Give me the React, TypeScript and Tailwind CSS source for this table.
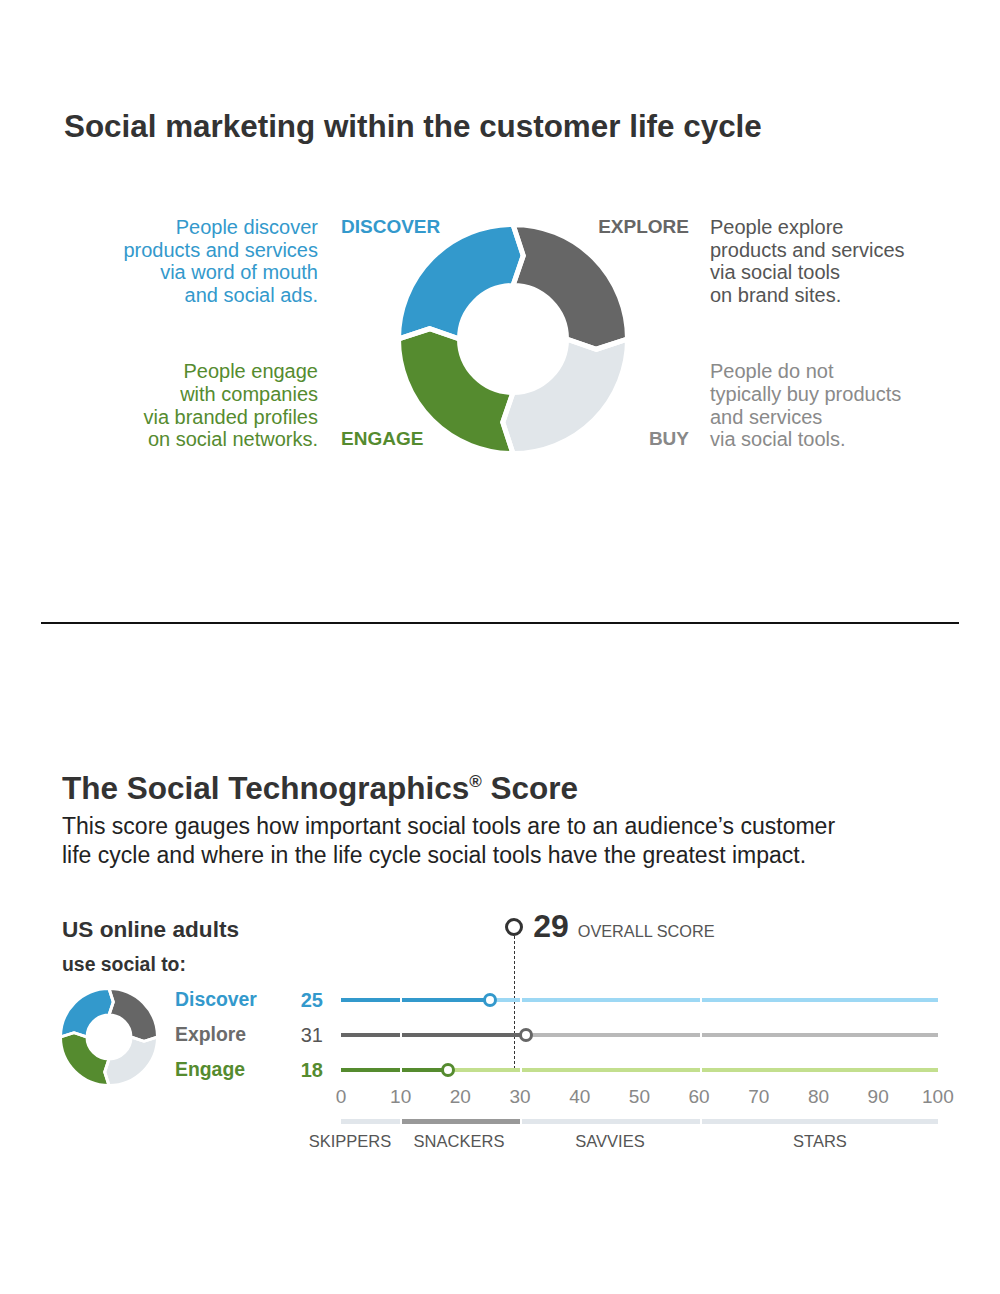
import React from 'react';

// ============================================================================
// DATA
// ============================================================================

type Segment = { a0: number; a1: number; color: string };

const DONUT_SEGMENTS: Segment[] = [
  { a0: 180, a1: 270, color: '#3399cc' }, // discover
  { a0: 270, a1: 360, color: '#666666' }, // explore
  { a0: 0, a1: 90, color: '#e1e6ea' }, // buy
  { a0: 90, a1: 180, color: '#558b2f' }, // engage
];

const SCALE = [
  { start: 0, len: 10, grow: 'grow-[10]' },
  { start: 10, len: 20, grow: 'grow-[20]' },
  { start: 30, len: 30, grow: 'grow-[30]' },
  { start: 60, len: 40, grow: 'grow-[40]' },
];

const ROWS = [
  {
    key: 'discover',
    label: 'Discover',
    value: 25,
    labelCls: 'font-bold text-[#3399cc]',
    numCls: 'font-bold text-[#3399cc]',
    dark: 'bg-[#3399cc]',
    light: 'bg-[#9dd8f4]',
    ring: 'border-[#3399cc]',
  },
  {
    key: 'explore',
    label: 'Explore',
    value: 31,
    labelCls: 'font-bold text-[#6b6b6b]',
    numCls: 'text-[#555555]',
    dark: 'bg-[#666666]',
    light: 'bg-[#b9b9b9]',
    ring: 'border-[#666666]',
  },
  {
    key: 'engage',
    label: 'Engage',
    value: 18,
    labelCls: 'font-bold text-[#558b2f]',
    numCls: 'font-bold text-[#558b2f]',
    dark: 'bg-[#558b2f]',
    light: 'bg-[#c3df8e]',
    ring: 'border-[#558b2f]',
  },
];

const OVERALL = 29;
const TICKS = [0, 10, 20, 30, 40, 50, 60, 70, 80, 90, 100];

// ============================================================================
// DONUT
// ============================================================================

function Donut({ size, gap }: { size: number; gap: number }) {
  const ro = 112 + gap / 2;
  const ri = 56 - gap / 2;
  const rm = 84;
  const d = 7;

  const pt = (r: number, a: number) => {
    const t = (a * Math.PI) / 180;
    return `${(r * Math.cos(t)).toFixed(2)} ${(r * Math.sin(t)).toFixed(2)}`;
  };

  const path = (a0: number, a1: number) =>
    `M ${pt(ro, a0)} A ${ro} ${ro} 0 0 1 ${pt(ro, a1)} L ${pt(rm, a1 + d)} L ${pt(ri, a1)} ` +
    `A ${ri} ${ri} 0 0 0 ${pt(ri, a0)} L ${pt(rm, a0 + d)} Z`;

  return (
    <svg width={size} height={size} viewBox="-112 -112 224 224" className="block">
      {DONUT_SEGMENTS.map((s) => (
        <path key={`f${s.a0}`} d={path(s.a0, s.a1)} fill={s.color} />
      ))}
      {DONUT_SEGMENTS.map((s) => (
        <path
          key={`s${s.a0}`}
          d={path(s.a0, s.a1)}
          fill="none"
          stroke="#ffffff"
          strokeWidth={gap}
          strokeLinejoin="miter"
        />
      ))}
    </svg>
  );
}

// ============================================================================
// SCORE BAR
// ============================================================================

function ScoreBar({ row }: { row: (typeof ROWS)[number] }) {
  return (
    <div className="relative flex h-[35px] items-center">
      <div className="flex h-[4px] w-full gap-[2px]">
        {SCALE.map((s) => {
          const fill = Math.max(0, Math.min(1, (row.value - s.start) / s.len)) * 100;
          return (
            <div key={s.start} className={`${s.grow} basis-0 h-full ${row.light}`}>
              <div className={`h-full ${row.dark}`} style={{ width: `${fill}%` }} />
            </div>
          );
        })}
      </div>
      <div
        className={`absolute top-1/2 h-[14px] w-[14px] -translate-y-1/2 rounded-full border-[3px] bg-white ${row.ring}`}
        style={{ left: `calc(${row.value}% - 7px)` }}
      />
    </div>
  );
}

// ============================================================================
// APP
// ============================================================================

export default function App() {
  return (
    <div className="h-[1294px] w-[1000px] overflow-hidden bg-white font-['Liberation_Sans',Arial,sans-serif]">
      {/* ── Life cycle ─────────────────────────────────────── */}
      <div className="pl-[64px] pt-[109px]">
        <h1 className="text-[31.4px] font-bold leading-[36px] text-[#333333]">
          Social marketing within the customer life cycle
        </h1>

        <div className="mt-[71px] flex h-[235px]">
          <div className="flex w-[254px] flex-col justify-between text-right text-[20px] leading-[22.7px]">
            <p className="text-[#3399cc]">
              People discover
              <br />
              products and services
              <br />
              via word of mouth
              <br />
              and social ads.
            </p>
            <p className="text-[#558b2f]">
              People engage
              <br />
              with companies
              <br />
              via branded profiles
              <br />
              on social networks.
            </p>
          </div>

          <div className="ml-[23px] grid w-[348px] text-[19px] font-bold leading-[22.7px]">
            <div className="col-start-1 row-start-1 self-end justify-self-start ml-[60px]">
              <Donut size={224} gap={5} />
            </div>
            <span className="col-start-1 row-start-1 self-start justify-self-start text-[#3399cc]">DISCOVER</span>
            <span className="col-start-1 row-start-1 self-start justify-self-end text-[#666666]">EXPLORE</span>
            <span className="col-start-1 row-start-1 self-end justify-self-start text-[#558b2f]">ENGAGE</span>
            <span className="col-start-1 row-start-1 self-end justify-self-end text-[#888888]">BUY</span>
          </div>

          <div className="ml-[21px] flex flex-col justify-between text-[20px] leading-[22.7px]">
            <p className="text-[#555555]">
              People explore
              <br />
              products and services
              <br />
              via social tools
              <br />
              on brand sites.
            </p>
            <p className="text-[#8a8a8a]">
              People do not
              <br />
              typically buy products
              <br />
              and services
              <br />
              via social tools.
            </p>
          </div>
        </div>
      </div>

      <div className="mx-[41px] mt-[171px] h-[2px] bg-[#111111]" />

      {/* ── Technographics score ───────────────────────────── */}
      <div className="pl-[62px]">
        <h2 className="mt-[146px] text-[31.5px] font-bold leading-[36px] text-[#333333]">
          The Social Technographics
          <sup className="-top-[12px] text-[17px] font-bold">®</sup> Score
        </h2>
        <p className="mt-[5.5px] text-[23px] leading-[29px] text-[#222222]">
          This score gauges how important social tools are to an audience’s customer
          <br />
          life cycle and where in the life cycle social tools have the greatest impact.
        </p>

        <div className="mt-[42.5px] flex">
          {/* Left legend */}
          <div className="w-[261px]">
            <div className="flex h-[35px] items-center text-[22.6px] font-bold text-[#333333]">US online adults</div>
            <div className="flex h-[35px] items-center text-[19.4px] font-bold text-[#333333]">use social to:</div>
            <div className="flex">
              <div className="w-[113px] pt-[8px]">
                <Donut size={94} gap={7} />
              </div>
              <div className="w-[110px]">
                {ROWS.map((r) => (
                  <div key={r.key} className={`flex h-[35px] items-center text-[19.4px] ${r.labelCls}`}>
                    {r.label}
                  </div>
                ))}
              </div>
              <div className="w-[38px]">
                {ROWS.map((r) => (
                  <div key={r.key} className={`flex h-[35px] items-center justify-end text-[20px] ${r.numCls}`}>
                    {r.value}
                  </div>
                ))}
              </div>
            </div>
          </div>

          {/* Chart */}
          <div className="relative ml-[18px] w-[597px]">
            <div
              className="absolute top-[24px] h-[133px] w-[1px] bg-[repeating-linear-gradient(to_bottom,#333333_0_3px,transparent_3px_5px)]"
              style={{ left: `${OVERALL}%` }}
            />
            <div className="flex h-[30px] items-center" style={{ paddingLeft: `calc(${OVERALL}% - 9px)` }}>
              <div className="h-[18px] w-[18px] rounded-full border-[3.5px] border-[#333333] bg-white" />
              <div className="ml-[10px] flex items-baseline">
                <span className="text-[32px] font-bold leading-[30px] text-[#333333]">{OVERALL}</span>
                <span className="ml-[9px] text-[16.3px] text-[#555555]">OVERALL SCORE</span>
              </div>
            </div>
            <div className="h-[40px]" />
            {ROWS.map((r) => (
              <ScoreBar key={r.key} row={r} />
            ))}

            <div className="-mx-[20px] flex h-[20px] justify-between text-[19px] leading-[20px] text-[#888888]">
              {TICKS.map((t) => (
                <span key={t} className="w-[40px] text-center">
                  {t}
                </span>
              ))}
            </div>

            <div className="mt-[12px] flex h-[5px] gap-[2px]">
              <div className="grow-[10] basis-0 bg-[#e1e6eb]" />
              <div className="grow-[20] basis-0 bg-[#999999]" />
              <div className="grow-[30] basis-0 bg-[#e1e6eb]" />
              <div className="grow-[40] basis-0 bg-[#e1e6eb]" />
            </div>

            <div className="-ml-[41px] mt-[7px] flex text-[16.5px] leading-[20px] text-[#555555]">
              <span className="w-[100px] text-center">SKIPPERS</span>
              <span className="w-[118px] text-center">SNACKERS</span>
              <span className="w-[184px] text-center">SAVVIES</span>
              <span className="w-[236px] text-center">STARS</span>
            </div>
          </div>
        </div>
      </div>
    </div>
  );
}
